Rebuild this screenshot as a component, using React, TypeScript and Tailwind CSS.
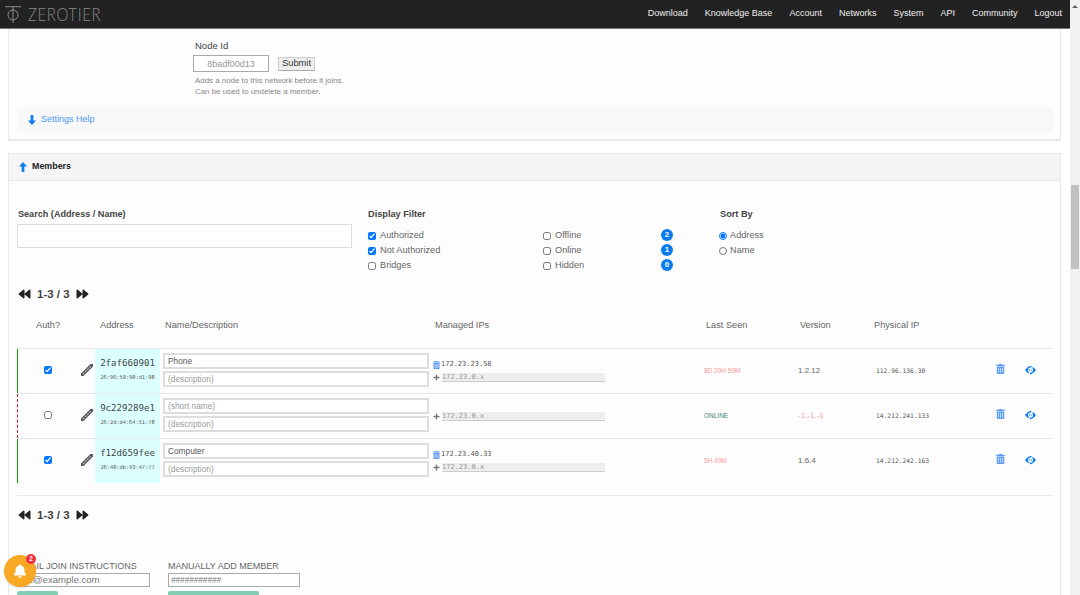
import { FaBackward, FaBell, FaForward, FaPlus, FaTrashAlt } from 'react-icons/fa'

const navLinks = ['Download', 'Knowledge Base', 'Account', 'Networks', 'System', 'API', 'Community', 'Logout']

interface Member {
  auth: boolean
  address: string
  mac: string
  name: string
  ip?: string
  lastSeen: string
  online?: boolean
  version: string
  physical: string
}

const members: Member[] = [
  { auth: true, address: '2faf660901', mac: '26:96:59:90:d1:98', name: 'Phone', ip: '172.23.23.58', lastSeen: '8D 20H 59M', version: '1.2.12', physical: '112.96.136.30' },
  { auth: false, address: '9c229289e1', mac: '26:2d:d4:64:51:78', name: '', lastSeen: 'ONLINE', online: true, version: '-1.-1.-1', physical: '14.212.241.133' },
  { auth: true, address: 'f12d659fee', mac: '26:40:db:93:47:77', name: 'Computer', ip: '172.23.40.33', lastSeen: '5H 49M', version: '1.6.4', physical: '14.212.242.163' },
]

function ThickArrow({ up }: { up?: boolean }) {
  return (
    <svg viewBox="0 0 9 11" className={`h-[10px] w-[8px] fill-[#0a7cf0] ${up ? 'rotate-180' : ''}`}>
      <path d="M3 0h3v6h3l-4.500 5L0 6h3z" />
    </svg>
  )
}

function Wrench() {
  return (
    <svg viewBox="0 0 12 12" className="h-[12px] w-[12px]">
      <path d="M1.500 10.500 10.500 1.500" stroke="#555" strokeWidth="3.500" strokeLinecap="round" />
      <path d="M2 10 10 2" stroke="#bbb" strokeWidth="1.200" strokeDasharray="2 1" />
    </svg>
  )
}

function EyeOff() {
  return (
    <svg viewBox="0 0 12 10" className="-mt-[3px] h-[10px] w-[11px]">
      <path d="M0 5C2.500 1.500 5 .5 6 .5s3.500 1 6 4.500C9.500 8.500 7 9.500 6 9.500S2.500 8.500 0 5z" fill="#0a7cf0" />
      <circle cx="6" cy="5" r="2.800" fill="#fff" />
      <circle cx="6" cy="5" r="1.500" fill="#0a7cf0" />
      <path d="M8.500 0 4 10" stroke="#fff" strokeWidth="1.300" />
    </svg>
  )
}

function Pager() {
  return (
    <div className="flex h-[16px] items-center text-[#333]">
      <FaBackward className="ml-[1px] h-[12px] w-[13px] text-[#222]" />
      <span className="ml-[6px] pt-[1px] text-[11.500px] font-bold text-[#444]">1-3 / 3</span>
      <FaForward className="ml-[6px] h-[12px] w-[13px] text-[#222]" />
    </div>
  )
}

function Check({ label, checked, wide }: { label: string; checked?: boolean; wide?: boolean }) {
  return (
    <label className={`flex h-[15px] items-center ${wide ? 'w-[118px]' : ''}`}>
      <input type="checkbox" defaultChecked={checked} className="m-0 h-[8px] w-[8px] accent-[#0075ff]" />
      <span className="ml-[4px] text-[9.200px] text-[#666]">{label}</span>
    </label>
  )
}

function Badge({ n }: { n: number }) {
  return (
    <div className="flex h-[15px] items-center">
      <span className="-mt-[2px] flex h-[12px] w-[12px] items-center justify-center rounded-full bg-[#0a7cf0] text-[8px] font-bold text-white">{n}</span>
    </div>
  )
}

function MemberRow({ m }: { m: Member }) {
  const edge = m.auth ? 'border-solid border-l-[#129a12]' : 'border-dashed border-l-[#b81c2c]'
  return (
    <div className="border-t border-[#e9e9e9]">
      <div className={`grid h-[44px] grid-cols-[77px_65px_273px_271px_94px_78px_120px_29px_1fr] items-center border-l ${edge}`}>
        <div className="-mt-[2px] flex items-center">
          <input type="checkbox" defaultChecked={m.auth} className="ml-[26px] h-[8px] w-[8px] accent-[#0075ff]" />
          <span className="ml-[29px] flex"><Wrench /></span>
        </div>
        <div className="flex h-[44px] flex-col items-center bg-[#dcffff] pt-[8px]">
          <span className="font-['DejaVu_Sans_Mono',monospace] text-[9.100px] leading-[13px] text-[#444]">{m.address}</span>
          <span className="mt-[4px] font-['DejaVu_Sans_Mono',monospace] text-[5.300px] leading-[7px] text-[#555]">{m.mac}</span>
        </div>
        <div className="-mt-[2px] flex flex-col gap-[2px] pl-[3px]">
          <input readOnly defaultValue={m.name} placeholder="(short name)" className="h-[16px] w-[266px] border-2 border-[#ddd] bg-white px-[3px] text-[8.300px] text-[#555] outline-none placeholder:text-[#999]" />
          <input readOnly placeholder="(description)" className="h-[16px] w-[266px] border-2 border-[#ddd] bg-white px-[3px] text-[8.300px] text-[#555] outline-none placeholder:text-[#999]" />
        </div>
        <div className="flex flex-col gap-[2px] font-['DejaVu_Sans_Mono',monospace]">
          {m.ip && (
            <div className="flex h-[11px] items-center">
              <FaTrashAlt className="h-[8px] w-[7px] text-[#5b9cf5]" />
              <span className="ml-[1px] text-[7px] text-[#555]">{m.ip}</span>
            </div>
          )}
          <div className="flex h-[11px] items-center">
            <FaPlus className="h-[7px] w-[7px] text-[#777]" />
            <div className="ml-[2px] h-[9px] w-[163px] border-b border-[#ccc] bg-[#eee] text-[7px] leading-[8px] text-[#999]">172.23.0.x</div>
          </div>
        </div>
        <span className={`text-[6.500px] ${m.online ? 'text-[#3a8a70]' : 'text-[#f79a9a]'}`}>{m.lastSeen}</span>
        <span className={`text-[8px] ${m.version.startsWith('-') ? 'text-[#f7a5a5]' : 'text-[#666]'}`}>{m.version}</span>
        <span className="font-['DejaVu_Sans_Mono',monospace] text-[6.300px] text-[#555]">{m.physical}</span>
        <FaTrashAlt className="-mt-[4px] h-[10px] w-[9px] text-[#5b9cf5]" />
        <EyeOff />
      </div>
    </div>
  )
}

export default function App() {
  return (
    <div className="flex h-[595px] w-[1080px] overflow-hidden bg-white font-['Liberation_Sans',Arial,sans-serif]">
      <div className="relative w-[1070px] shrink-0">
        {/* Top bar */}
        <nav className="flex h-[29px] items-center justify-between border-b border-[#777] bg-[#222] pr-[8px] pl-[5px]">
          <div className="flex items-center">
            <svg viewBox="0 0 16 17" className="h-[17px] w-[16px] fill-none stroke-[#8a8a8a]">
              <path d="M0 .7h16M8 1v16" strokeWidth="1" />
              <circle cx="8" cy="9" r="5" strokeWidth="1" />
            </svg>
            <span className="ml-[7px] origin-left scale-y-[1.12] font-['Lato',sans-serif] text-[15px] font-light tracking-[0.600px] text-[#8a8a8a]">ZEROTIER</span>
          </div>
          <div className="flex gap-[17px] text-[9px] text-[#eee]">
            {navLinks.map(link => (
              <a key={link}>{link}</a>
            ))}
          </div>
        </nav>

        {/* Settings panel */}
        <section className="ml-[8px] h-[112px] w-[1053px] border-x border-b-2 border-[#e8e8e8] bg-[#fdfdfd]">
          <div className="pt-[11px] pl-[186px]">
            <div className="text-[9.500px] leading-[12px] text-[#444]">Node Id</div>
            <div className="-ml-[2px] mt-[3px] flex items-center">
              <input readOnly placeholder="8badf00d13" className="h-[17px] w-[76px] border border-[#aaa] bg-white text-center text-[9px] outline-none placeholder:text-[#999]" />
              <button className="ml-[9px] h-[14px] w-[37px] rounded-[1px] border border-[#ccc] border-b-[#aaa] bg-[#eee] text-[9.300px] leading-none text-[#333]">Submit</button>
            </div>
            <p className="mt-[3px] text-[7.900px] leading-[11px] text-[#888]">Adds a node to this network before it joins.<br />Can be used to undelete a member.</p>
          </div>
          <div className="mt-[10px] mr-[7px] ml-[8px] flex h-[26px] items-center bg-[#f8f8f8] pl-[11px]">
            <ThickArrow />
            <span className="ml-[5px] text-[9px] text-[#4a9bf5]">Settings Help</span>
          </div>
        </section>

        {/* Members panel */}
        <section className="mt-[12px] ml-[8px] w-[1053px] border-x border-[#e8e8e8] bg-[#fdfdfd]">
          <div className="flex h-[28px] items-center border-y border-[#e8e8e8] bg-[#f5f5f5] pl-[10px]">
            <ThickArrow up />
            <span className="ml-[5px] text-[8.900px] font-bold text-[#222]">Members</span>
          </div>
          <div className="mr-[7px] ml-[8px] pt-[27px]">
            <div className="flex h-[65px]">
              <div className="w-[351px]">
                <div className="pl-[1px] text-[9.100px] leading-[12px] font-bold text-[#444]">Search (Address / Name)</div>
                <input readOnly className="mt-[4px] block h-[24px] w-[335px] border border-[#ddd] bg-white outline-none" />
              </div>
              <div className="w-[352px]">
                <div className="text-[9.200px] leading-[12px] font-bold text-[#444]">Display Filter</div>
                <div className="mt-[8px] grid grid-cols-[175px_118px_1fr]">
                  <Check label="Authorized" checked />
                  <Check label="Offline" wide />
                  <Badge n={2} />
                  <Check label="Not Authorized" checked />
                  <Check label="Online" wide />
                  <Badge n={1} />
                  <Check label="Bridges" />
                  <Check label="Hidden" wide />
                  <Badge n={0} />
                </div>
              </div>
              <div>
                <div className="text-[9.200px] leading-[12px] font-bold text-[#444]">Sort By</div>
                <div className="mt-[8px]">
                  {['Address', 'Name'].map((s, i) => (
                    <label key={s} className="-ml-[1px] flex h-[15px] items-center">
                      <input type="radio" name="sort" defaultChecked={i === 0} className="m-0 h-[8px] w-[8px] accent-[#0075ff]" />
                      <span className="ml-[3px] text-[9.200px] text-[#666]">{s}</span>
                    </label>
                  ))}
                </div>
              </div>
            </div>

            <div className="mt-[13px]"><Pager /></div>

            {/* Table head */}
            <div className="grid h-[46px] grid-cols-[83px_65px_270px_271px_94px_74px_1fr] items-center pt-[2px] text-[9.200px] text-[#666]">
              <span className="pl-[19px]">Auth?</span>
              <span>Address</span>
              <span>Name/Description</span>
              <span>Managed IPs</span>
              <span>Last Seen</span>
              <span>Version</span>
              <span>Physical IP</span>
            </div>

            {members.map(m => (
              <MemberRow key={m.address} m={m} />
            ))}
            <div className="mt-[12px] border-t border-[#e9e9e9]" />

            <div className="mt-[11px]"><Pager /></div>

            {/* Add member forms */}
            <div className="mt-[37px] flex">
              <div className="w-[151px]">
                <div className="text-[9px] leading-[12px] text-[#666]">EMAIL JOIN INSTRUCTIONS</div>
                <input readOnly placeholder="joe@example.com" className="mt-[1px] block h-[14px] w-[133px] border border-[#aaa] bg-white px-[2px] text-[9.600px] outline-none placeholder:text-[#777]" />
                <div className="mt-[4px] h-[20px] w-[41px] rounded-[2px] bg-[#82cdb2]" />
              </div>
              <div>
                <div className="text-[9px] leading-[12px] text-[#666]">MANUALLY ADD MEMBER</div>
                <input readOnly placeholder="###########" className="mt-[1px] block h-[14px] w-[132px] border border-[#aaa] bg-white px-[2px] text-[8.200px] italic outline-none placeholder:text-[#777]" />
                <div className="mt-[4px] h-[20px] w-[91px] rounded-[2px] bg-[#82cdb2]" />
              </div>
            </div>
          </div>
        </section>

        {/* Notification bell */}
        <div className="absolute top-[555px] left-[4px] flex h-[32px] w-[32px] items-center justify-center rounded-full bg-[#f9a825] shadow-sm">
          <FaBell className="h-[14px] w-[14px] text-white" />
          <span className="absolute -top-[1px] right-[0px] flex h-[10px] w-[10px] items-center justify-center rounded-full bg-[#f03040] text-[6.500px] font-bold text-white">2</span>
        </div>
      </div>

      {/* Scrollbar */}
      <div className="flex w-[10px] flex-col items-center bg-[#f1f1f1]">
        <div className="mt-[5px] h-0 w-0 border-x-[3px] border-b-[3px] border-x-transparent border-b-[#666]" />
        <div className="mt-[177px] h-[84px] w-[8px] bg-[#c1c1c1]" />
      </div>
    </div>
  )
}
